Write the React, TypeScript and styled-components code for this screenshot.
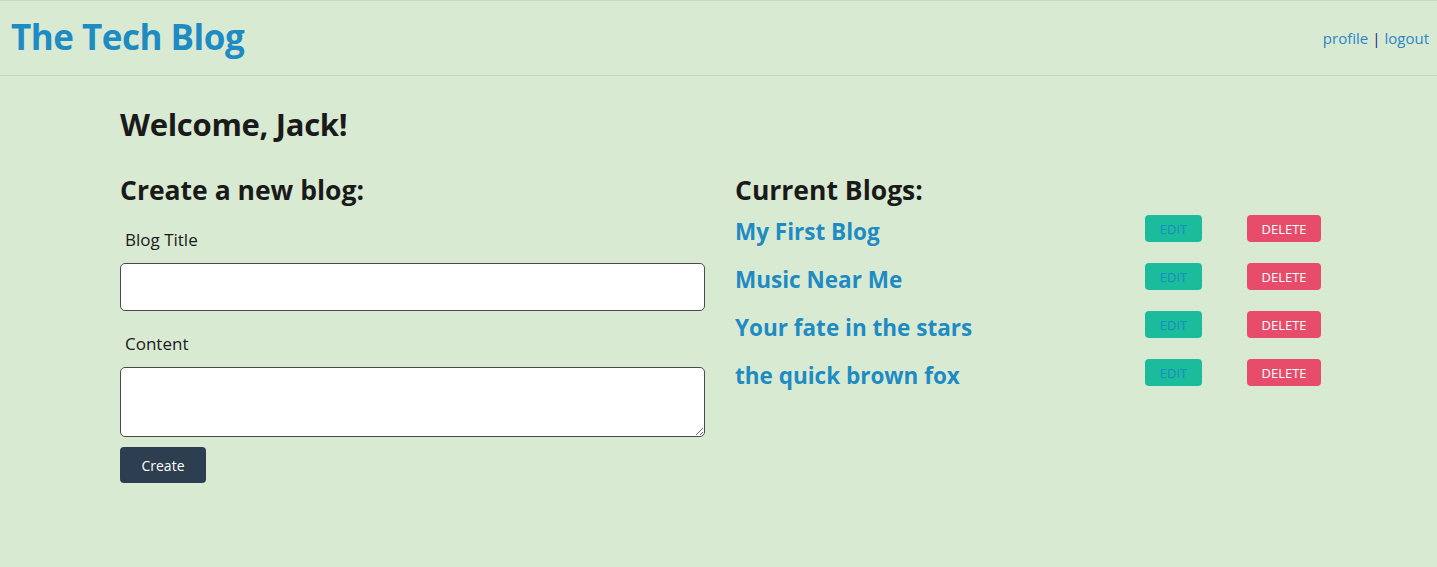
import React from "react";
import styled, { createGlobalStyle } from "styled-components";

const GlobalStyle = createGlobalStyle`
  html, body { margin: 0; padding: 0; background: #d9ead3; }
  body { font-family: "Open Sans", "Noto Sans", sans-serif; color: #1a1a1a; }
  * { box-sizing: border-box; }
`;

const Header = styled.header`
  display: flex;
  align-items: center;
  justify-content: space-between;
  height: 76px;
  padding: 0 8px 0 11px;
  border-top: 1px solid #c9d6c5;
  border-bottom: 1px solid #c9d6c5;
`;

const Brand = styled.a`
  margin-bottom: 3px;
  font-size: 35px;
  font-weight: 700;
  color: #1e8bc3;
  text-decoration: none;
  letter-spacing: -0.5px;
`;

const Nav = styled.nav`
  font-size: 15px;
  color: #1a237e;
  display: flex;
  gap: 4px;
`;

const NavLink = styled.a`
  color: #2a86c4;
  text-decoration: none;
`;

const Main = styled.main`
  padding: 27px 120px 0 120px;
`;

const Welcome = styled.h1`
  margin: 0 0 28px;
  font-size: 31px;
  font-weight: 700;
  letter-spacing: -0.3px;
`;

const Columns = styled.div`
  display: grid;
  grid-template-columns: 585px 582px;
  column-gap: 30px;
`;

const SectionTitle = styled.h2`
  margin: 0;
  font-size: 26.5px;
  font-weight: 700;
  line-height: 34px;
`;

const Form = styled.form`
  display: flex;
  flex-direction: column;
`;

const Label = styled.label<{ $first?: boolean }>`
  font-size: 17px;
  margin: ${(p) => (p.$first ? "21px" : "13px")} 0 11px 5px;
  line-height: 24px;
`;

const Input = styled.input`
  height: 48px;
  border: 1px solid #4a4a4a;
  border-radius: 5px;
  background: #fff;
  margin-bottom: 8px;
`;

const TextArea = styled.textarea`
  height: 70px;
  border: 1px solid #4a4a4a;
  border-radius: 5px;
  background: #fff;
  resize: vertical;
`;

const CreateButton = styled.button`
  margin-top: 10px;
  width: 86px;
  height: 36px;
  border: none;
  border-radius: 4px;
  background: #2c3e50;
  color: #fff;
  font-family: inherit;
  font-size: 14px;
`;

const BlogList = styled.div`
  display: flex;
  flex-direction: column;
`;

const BlogRow = styled.div`
  display: grid;
  grid-template-columns: 410px 57px 45px 74px;
  align-items: center;
  height: 48px;
`;

const BlogTitle = styled.a`
  font-size: 22.5px;
  font-weight: 700;
  color: #1e8bc3;
  text-decoration: none;
`;

const SmallButton = styled.button<{ $variant: "edit" | "delete" }>`
  grid-column: ${(p) => (p.$variant === "edit" ? 2 : 4)};
  height: 27px;
  margin-bottom: 5px;
  padding: 0;
  border: none;
  border-radius: 4px;
  font-family: inherit;
  font-size: 13px;
  text-transform: uppercase;
  background: ${(p) => (p.$variant === "edit" ? "#1abc9c" : "#e74c6a")};
  color: ${(p) => (p.$variant === "edit" ? "#1e8bc3" : "#fff")};
`;

const blogs = ["My First Blog", "Music Near Me", "Your fate in the stars", "the quick brown fox"];

export default function App() {
  return (
    <>
      <GlobalStyle />
      <Header>
        <Brand href="#">The Tech Blog</Brand>
        <Nav>
          <NavLink href="#">profile</NavLink>|<NavLink href="#">logout</NavLink>
        </Nav>
      </Header>
      <Main>
        <Welcome>Welcome, Jack!</Welcome>
        <Columns>
          <Form>
            <SectionTitle>Create a new blog:</SectionTitle>
            <Label $first>Blog Title</Label>
            <Input type="text" />
            <Label>Content</Label>
            <TextArea />
            <div>
              <CreateButton type="button">Create</CreateButton>
            </div>
          </Form>
          <BlogList>
            <SectionTitle>Current Blogs:</SectionTitle>
            {blogs.map((b) => (
              <BlogRow key={b}>
                <BlogTitle href="#">{b}</BlogTitle>
                <SmallButton $variant="edit">Edit</SmallButton>
                <SmallButton $variant="delete">Delete</SmallButton>
              </BlogRow>
            ))}
          </BlogList>
        </Columns>
      </Main>
    </>
  );
}
